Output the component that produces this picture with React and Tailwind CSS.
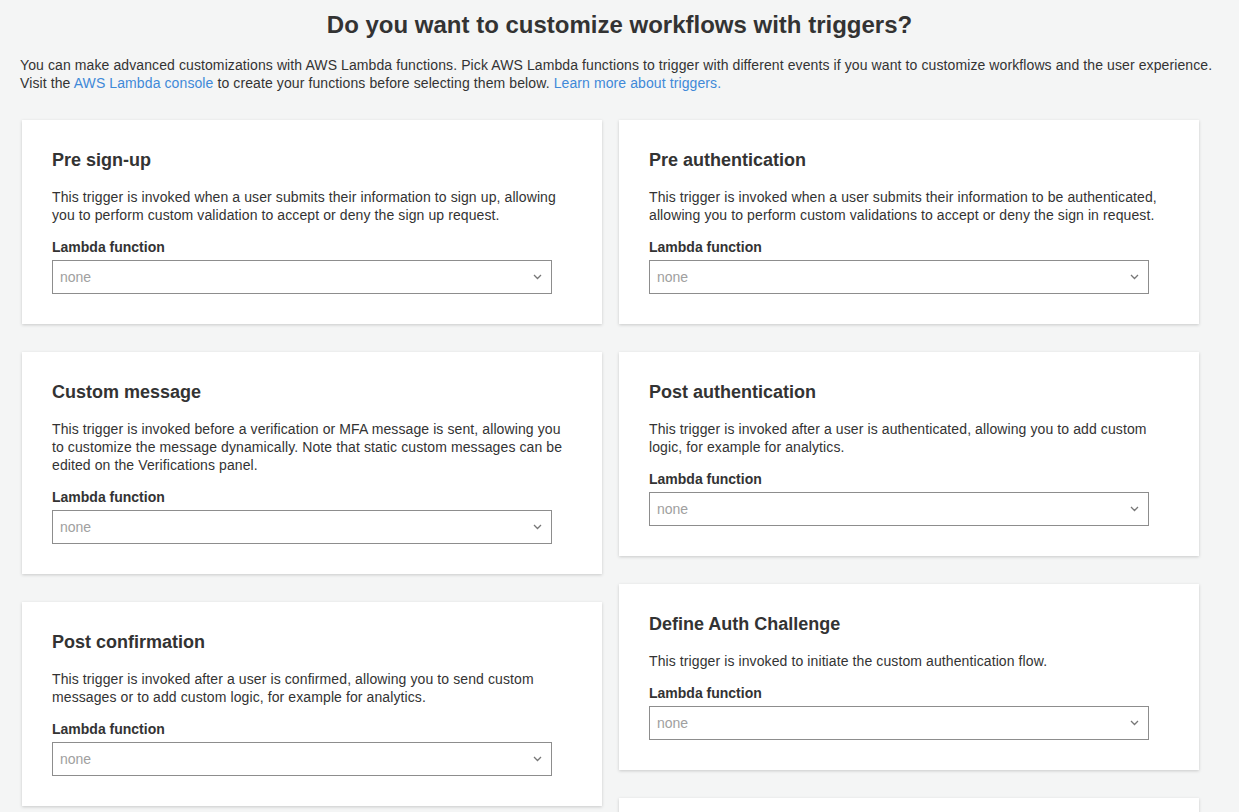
import React from "react";

const left = [
  {
    title: "Pre sign-up",
    desc: "This trigger is invoked when a user submits their information to sign up, allowing you to perform custom validation to accept or deny the sign up request.",
  },
  {
    title: "Custom message",
    desc: "This trigger is invoked before a verification or MFA message is sent, allowing you to customize the message dynamically. Note that static custom messages can be edited on the Verifications panel.",
  },
  {
    title: "Post confirmation",
    desc: "This trigger is invoked after a user is confirmed, allowing you to send custom messages or to add custom logic, for example for analytics.",
  },
];

const right = [
  {
    title: "Pre authentication",
    desc: "This trigger is invoked when a user submits their information to be authenticated, allowing you to perform custom validations to accept or deny the sign in request.",
  },
  {
    title: "Post authentication",
    desc: "This trigger is invoked after a user is authenticated, allowing you to add custom logic, for example for analytics.",
  },
  {
    title: "Define Auth Challenge",
    desc: "This trigger is invoked to initiate the custom authentication flow.",
  },
  {
    title: "Create Auth Challenge",
    desc: "This trigger is invoked after Define Auth Challenge if a custom challenge has been specified as part of the Define Auth Challenge trigger.",
  },
];

const TriggerCard = ({ title, desc }) => (
  <div className="bg-white shadow-[0_1px_3px_rgba(0,0,0,0.18)] px-[30px] pt-[30px] pb-[30px]">
    <h3 className="text-[18px] leading-[20px] font-bold text-[#333]">{title}</h3>
    <p className="mt-[18px] text-[14px] leading-[18px] tracking-[0.1px] text-[#333]">{desc}</p>
    <div className="mt-[14px] text-[14px] leading-[18px] font-bold text-[#333]">
      Lambda function
    </div>
    <div className="mt-[4px] w-[500px] h-[34px] border border-[#8d8d8d] flex items-center justify-between pl-[7px] pr-[9px]">
      <span className="text-[14px] text-[#a0a0a0] font-light">none</span>
      <svg width="9" height="6" viewBox="0 0 9 6" fill="none">
        <path d="M1 1l3.5 3.5L8 1" stroke="#777" strokeWidth="1.3" />
      </svg>
    </div>
  </div>
);

const App = () => {
  return (
    <div
      className="min-h-screen bg-[#f4f5f5] text-[#333]"
      style={{ fontFamily: '"Liberation Sans", Arial, sans-serif' }}
    >
      <h1 className="text-center text-[24px] leading-[28px] font-bold text-[#333] pt-[11px]">
        Do you want to customize workflows with triggers?
      </h1>
      <p className="mt-[17px] px-[20px] text-[14px] leading-[18px] tracking-[0.1px] text-[#333]">
        You can make advanced customizations with AWS Lambda functions. Pick AWS Lambda functions to
        trigger with different events if you want to customize workflows and the user experience.
        <br />
        Visit the <a className="text-[#3f89d8]">AWS Lambda console</a> to create your functions before
        selecting them below. <a className="text-[#3f89d8]">Learn more about triggers.</a>
      </p>
      <div className="mt-[28px] pl-[22px] pr-[40px] flex gap-[17px] items-start">
        <div className="w-[580px] flex flex-col gap-[28px]">
          {left.map((c) => (
            <TriggerCard key={c.title} {...c} />
          ))}
        </div>
        <div className="w-[580px] flex flex-col gap-[28px]">
          {right.map((c) => (
            <TriggerCard key={c.title} {...c} />
          ))}
        </div>
      </div>
    </div>
  );
};

export default App;
